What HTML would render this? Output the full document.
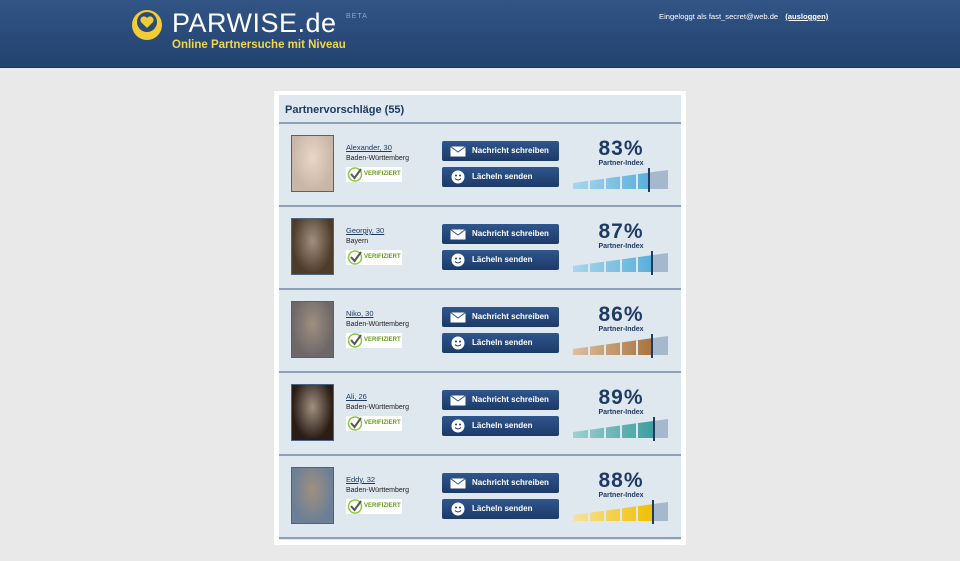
<!DOCTYPE html>
<html><head><meta charset="utf-8"><style>
*{margin:0;padding:0;box-sizing:border-box}
body{width:960px;height:561px;background:#e9e9e9;font-family:"Liberation Sans",Arial,sans-serif;position:relative;overflow:hidden}
.hdr{position:absolute;left:0;top:0;width:960px;height:68px;background:linear-gradient(#325586,#22426f);border-bottom:1px solid #1a3357}
.logo{position:absolute;left:172px;top:8px;color:#fff;font-size:27px;letter-spacing:0.5px}
.beta{position:absolute;left:346px;top:13px;color:#8ea6c6;font-size:7px;letter-spacing:1px}
.slog{position:absolute;left:172px;top:39px;color:#f1d64a;font-size:11.5px;font-weight:bold}
.login{position:absolute;left:659px;top:12px;color:#fff;font-size:7.6px}
.login u{font-weight:bold;margin-left:5px}
.panel{position:absolute;left:274px;top:91px;width:412px;height:454px;background:#fff}
.inner{position:absolute;left:5px;top:4px;width:402px;height:445px;background:#dfe7ef}
.title{position:absolute;left:6px;top:9px;font-size:11px;font-weight:bold;color:#1f3b63}
.row{position:absolute;left:0;width:402px;height:83px;border-top:2px solid #8ea0b5}
.ph{position:absolute;left:12px;top:11px;width:43px;height:57px;border:1px solid #4a6380}
.nm{position:absolute;left:67px;top:19px;font-size:7.5px;color:#1f3b63;text-decoration:underline}
.rg{position:absolute;left:67px;top:31px;font-size:7px;color:#222}
.ver{position:absolute;left:67px;top:43px;width:56px;height:15px;background:#fff}
.ver span{position:absolute;left:18px;top:4px;font-size:6px;font-weight:bold;color:#6a9a1a}
.btn{position:absolute;left:163px;width:117px;height:20px;border-radius:2px;background:linear-gradient(#30568c,#1c3a68);color:#fff;font-size:8px;font-weight:bold;line-height:20px;padding-left:30px}
.pct{position:absolute;left:300px;width:84px;text-align:center;top:13px;font-size:21px;font-weight:bold;color:#1f3b63;letter-spacing:1px}
.pi{position:absolute;left:300px;width:84px;text-align:center;top:36px;font-size:7px;font-weight:bold;color:#1f3b63}
.bar{position:absolute;left:294px;top:44px}
</style></head><body>
<div class="hdr">
<svg style="position:absolute;left:130px;top:8px" width="34" height="34"><circle cx="17" cy="17" r="15" fill="#f1cc38"/><circle cx="17" cy="14" r="10" fill="#2b4a78"/><path d="M17 20 L11 14 A3.2 3.2 0 0 1 17 10 A3.2 3.2 0 0 1 23 14 Z" fill="#f1cc38"/></svg>
<div class="logo">PARWISE.de</div><div class="beta">BETA</div>
<div class="slog">Online Partnersuche mit Niveau</div>
<div class="login">Eingeloggt als fast_secret@web.de <u>(ausloggen)</u></div>
</div>
<div class="panel"><div class="inner">
<div class="title">Partnervorschläge (55)</div>
<div id="rows"></div>
</div></div>
<script>
var d=[["Alexander, 30","Baden-Württemberg","83%","#a9d6ee","#5ab0db",75,"#c9b6a6"],
["Georgiy, 30","Bayern","87%","#a9d6ee","#5ab0db",78,"#4e3b2a"],
["Niko, 30","Baden-Württemberg","86%","#dcc0a0","#a9733f",78,"#6d6868"],
["Ali, 26","Baden-Württemberg","89%","#9ed0d0","#3d9e9e",80,"#2a1d16"],
["Eddy, 32","Baden-Württemberg","88%","#f4e3a0","#f0c000",79,"#6d7f96"]];
var h="";
d.forEach(function(r,i){
var top=27+i*83;var m=r[5];
h+='<div class="row" style="top:'+top+'px">'+
'<div class="ph" style="background:radial-gradient(ellipse at 50% 40%,'+(i==0?'#e8d8c8':'#a09080')+' 0%,'+r[6]+' 70%)"></div>'+
'<div class="nm">'+r[0]+'</div><div class="rg">'+r[1]+'</div>'+
'<div class="ver"><svg width="16" height="15" style="position:absolute;left:1px;top:0"><circle cx="8" cy="7.5" r="6.5" fill="none" stroke="#8dc63f" stroke-width="1.5"/><path d="M4 7 L7.5 11 L14 2" stroke="#555" stroke-width="2" fill="none"/></svg><span>VERIFIZIERT</span></div>'+
'<div class="btn" style="top:17px"><svg width="16" height="11" style="position:absolute;left:8px;top:5px"><rect x="0.5" y="0.5" width="15" height="10" fill="#fff"/><path d="M0.5 0.5 L8 6 L15.5 0.5" stroke="#30568c" fill="none"/></svg>Nachricht schreiben</div>'+
'<div class="btn" style="top:43px"><svg width="14" height="14" style="position:absolute;left:9px;top:3px"><circle cx="7" cy="7" r="6.5" fill="#fff"/><circle cx="5" cy="5.5" r="1" fill="#1c3a68"/><circle cx="9" cy="5.5" r="1" fill="#1c3a68"/><path d="M4 8.5 Q7 11.5 10 8.5" stroke="#1c3a68" fill="none"/></svg>Lächeln senden</div>'+
'<div class="pct">'+r[2]+'</div><div class="pi">Partner-Index</div>'+
'<svg class="bar" width="96" height="26"><defs><linearGradient id="g'+i+'" x1="0" x2="1"><stop offset="0" stop-color="'+r[3]+'"/><stop offset="1" stop-color="'+r[4]+'"/></linearGradient><clipPath id="c'+i+'"><polygon points="0,15 95,2 95,21 0,21"/></clipPath></defs>'+
'<g clip-path="url(#c'+i+')"><rect x="0" y="0" width="'+m+'" height="26" fill="url(#g'+i+')"/><rect x="'+(m+1)+'" y="0" width="96" height="26" fill="#a5b8cc"/>'+
'<rect x="15" y="0" width="2" height="26" fill="#dfe7ef"/><rect x="31" y="0" width="2" height="26" fill="#dfe7ef"/><rect x="47" y="0" width="2" height="26" fill="#dfe7ef"/><rect x="63" y="0" width="2" height="26" fill="#dfe7ef"/></g>'+
'<rect x="'+m+'" y="0" width="2" height="24" fill="#1f3b63"/></svg>'+
'</div>';});
h+='<div class="row" style="top:442px;height:3px"></div>';
document.getElementById("rows").innerHTML=h;
</script>
</body></html>
